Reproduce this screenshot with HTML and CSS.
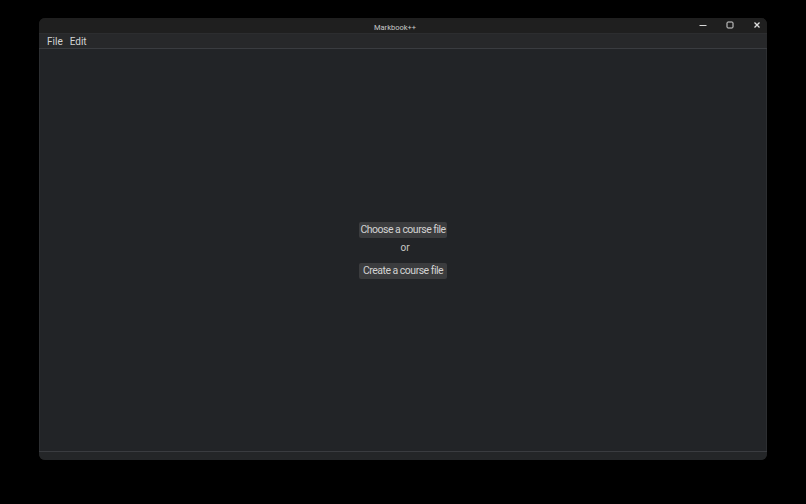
FILE: index.html
```html
<!DOCTYPE html>
<html>
<head>
<meta charset="utf-8">
<link rel="stylesheet" href="styles.css">
</head>
<body>
<div class="window">
  <div class="titlebar">
    <span class="title">Markbook++</span>
    <div class="controls">
      <svg class="ctl" width="10" height="10" viewBox="0 0 10 10"><path d="M1.5 5.5h7" stroke="#d8d8d8" stroke-width="1"/></svg>
      <svg class="ctl" width="10" height="10" viewBox="0 0 10 10"><rect x="2" y="2" width="6" height="6" rx="1" fill="none" stroke="#d8d8d8" stroke-width="1"/></svg>
      <svg class="ctl" width="10" height="10" viewBox="0 0 10 10"><path d="M2.5 2.5l5 5M7.5 2.5l-5 5" stroke="#e0e0e0" stroke-width="1.3"/></svg>
    </div>
  </div>
  <div class="menubar">
    <span class="menu">File</span>
    <span class="menu">Edit</span>
  </div>
  <div class="content">
    <button class="btn">Choose a course file</button>
    <span class="or">or</span>
    <button class="btn">Create a course file</button>
  </div>
  <div class="statusbar"></div>
</div>
</body>
</html>
```
FILE: styles.css
```css
html, body {
  margin: 0;
  padding: 0;
  background: #000;
  height: 100%;
}
body {
  padding: 18px 39px 0 39px;
  box-sizing: border-box;
  font-family: Roboto, "Liberation Sans", Arial, sans-serif;
}
.window {
  width: 728px;
  height: 442px;
  background: #1f1f1f;
  border-radius: 6px;
  overflow: hidden;
  display: flex;
  flex-direction: column;
}
.titlebar {
  height: 15px;
  flex: none;
  display: flex;
  align-items: center;
  justify-content: center;
  position: relative;
  background: #1f1f1f;
  padding-right: 16px;
}
.title {
  color: #c8c8c8;
  font-size: 7.5px;
  margin-top: 3px;
  white-space: nowrap;
}
.controls {
  position: absolute;
  right: 5px;
  top: 2px;
  display: flex;
  gap: 17px;
}
.ctl {
  display: block;
}
.menubar {
  height: 14px;
  flex: none;
  background: #27282a;
  border-top: 1px solid #2c2d2f;
  border-bottom: 1px solid #3a3c40;
  display: flex;
  align-items: center;
  padding-left: 8px;
  gap: 7px;
}
.menu {
  color: #d4d4d4;
  font-size: 10px;
}
.content {
  flex: 1;
  background: #222427;
  display: flex;
  flex-direction: column;
  align-items: center;
  justify-content: center;
  border-left: 1px solid #2c2e31;
  border-right: 1px solid #2c2e31;
}
.btn {
  background: #3b3c3e;
  color: #d2d2d2;
  border: none;
  border-radius: 2px;
  font-family: Roboto, "Liberation Sans", Arial, sans-serif;
  font-size: 10.5px;
  height: 16px;
  width: 88px;
  padding: 0;
  white-space: nowrap;
  letter-spacing: -0.5px;
  text-align: center;
}
.or {
  color: #c8c8c8;
  font-size: 10px;
  line-height: 12px;
  margin: 4px 0 9px 4px;
}
.statusbar {
  height: 8px;
  flex: none;
  background: #242628;
  border-top: 1px solid #3a3c40;
}
```
